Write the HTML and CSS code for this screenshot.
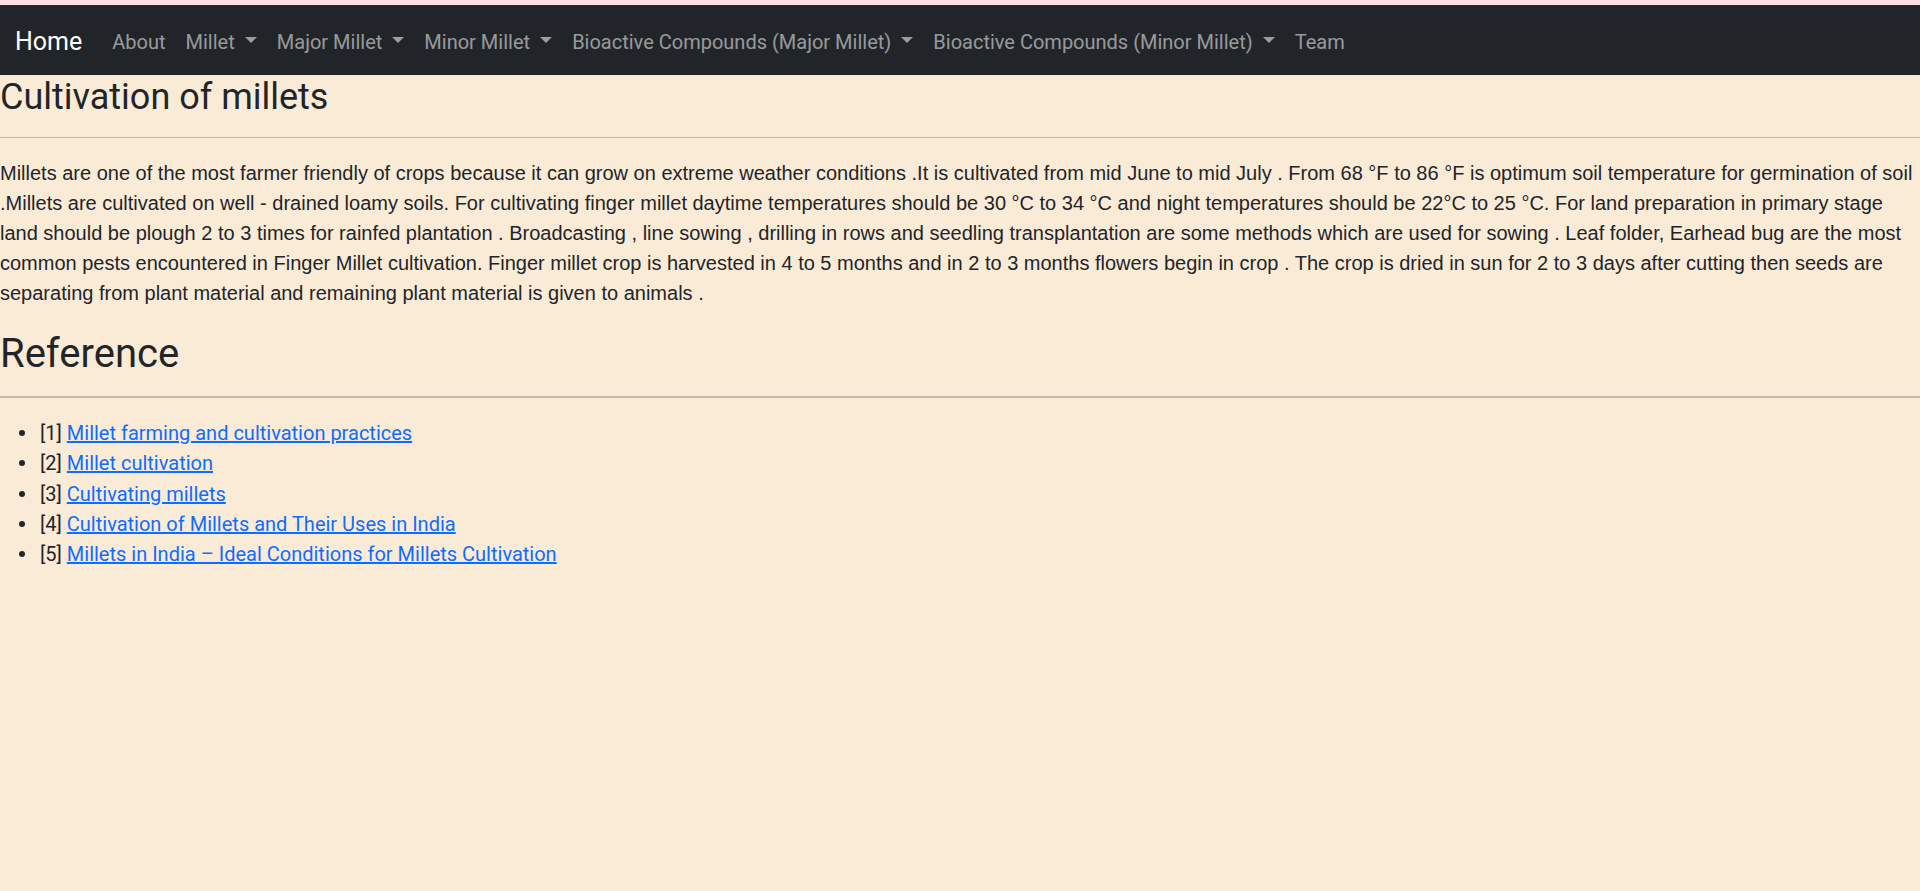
FILE: index.html
```html
<!DOCTYPE html>
<html lang="en">
<head>
<meta charset="utf-8">
<title>Cultivation of millets</title>
<link rel="stylesheet" href="styles.css">
</head>
<body>
<div class="top-strip"></div>
<nav class="navbar">
  <a class="brand" href="#">Home</a>
  <ul class="nav">
    <li><a class="nav-link" href="#">About</a></li>
    <li><a class="nav-link caret" href="#">Millet </a></li>
    <li><a class="nav-link caret" href="#">Major Millet </a></li>
    <li><a class="nav-link caret" href="#">Minor Millet </a></li>
    <li><a class="nav-link caret" href="#">Bioactive Compounds (Major Millet) </a></li>
    <li><a class="nav-link caret" href="#">Bioactive Compounds (Minor Millet) </a></li>
    <li><a class="nav-link" href="#">Team</a></li>
  </ul>
</nav>
<main>
  <h3 class="title">Cultivation of millets</h3>
  <hr class="rule">
  <p class="body-text">Millets are one of the most farmer friendly of crops because it can grow on extreme weather conditions .It is cultivated from mid June to mid July . From 68 °F to 86 °F is optimum soil temperature for germination of soil .Millets are cultivated on well - drained loamy soils. For cultivating finger millet daytime temperatures should be 30 °C to 34 °C and night temperatures should be 22°C to 25 °C. For land preparation in primary stage land should be plough 2 to 3 times for rainfed plantation . Broadcasting , line sowing , drilling in rows and seedling transplantation are some methods which are used for sowing . Leaf folder, Earhead bug are the most common pests encountered in Finger Millet cultivation. Finger millet crop is harvested in 4 to 5 months and in 2 to 3 months flowers begin in crop . The crop is dried in sun for 2 to 3 days after cutting then seeds are separating from plant material and remaining plant material is given to animals .</p>
  <h2 class="section">Reference</h2>
  <hr class="rule rule-thick">
  <ul class="refs">
    <li>[1] <a href="#">Millet farming and cultivation practices</a></li>
    <li>[2] <a href="#">Millet cultivation</a></li>
    <li>[3] <a href="#">Cultivating millets</a></li>
    <li>[4] <a href="#">Cultivation of Millets and Their Uses in India</a></li>
    <li>[5] <a href="#">Millets in India – Ideal Conditions for Millets Cultivation</a></li>
  </ul>
</main>
</body>
</html>
```
FILE: styles.css
```css
* {
  box-sizing: border-box;
}

html, body {
  margin: 0;
  padding: 0;
}

body {
  background: #faebd7;
  color: #212529;
  font-family: "Segoe UI", Roboto, "Noto Sans", "Liberation Sans", sans-serif;
  font-size: 20px;
  line-height: 1.5;
  min-height: 891px;
}

.top-strip {
  height: 5px;
  background: #fddde2;
}

.navbar {
  display: flex;
  align-items: center;
  background: #212529;
  padding: 10px 15px;
}

.brand {
  color: #fff;
  font-size: 25px;
  line-height: 37.5px;
  padding: 7.75px 0 4.75px;
  margin-right: 20px;
  text-decoration: none;
  white-space: nowrap;
}

.nav {
  display: flex;
  list-style: none;
  margin: 0;
  padding: 0;
}

.nav-link {
  display: block;
  padding: 11.5px 10px 8.5px;
  color: rgba(255, 255, 255, 0.55);
  text-decoration: none;
  line-height: 30px;
  white-space: pre;
}

.caret::after {
  content: "";
  display: inline-block;
  margin-left: 5.1px;
  vertical-align: 5.6px;
  border-top: 6px solid;
  border-right: 6px solid transparent;
  border-left: 6px solid transparent;
  border-bottom: 0;
}

.title {
  font-size: 36px;
  font-weight: 400;
  line-height: 39px;
  padding-top: 3px;
  margin: 0 0 10px;
}

.section {
  font-size: 40px;
  font-weight: 400;
  line-height: 44px;
  padding-top: 4px;
  margin: 0 0 10px;
}

.rule {
  margin: 20px 0;
  border: 0;
  border-top: 1.25px solid #212529;
  opacity: 0.25;
}

.rule-thick {
  border-top-width: 2px;
}

.body-text {
  font-family: "Liberation Sans", Arial, sans-serif;
  font-size: 20px;
  line-height: 30px;
  margin: 0 0 20px;
}

.refs {
  list-style: none;
  margin: 0 0 20px;
  padding-left: 40px;
}

.refs li {
  line-height: 30.25px;
}

.refs li::before {
  content: "";
  display: inline-block;
  width: 6px;
  height: 6px;
  border-radius: 50%;
  background: #212529;
  margin-left: -21px;
  margin-right: 15px;
  vertical-align: 4px;
}

.refs a {
  color: #0d6efd;
  text-decoration: underline;
}
```
